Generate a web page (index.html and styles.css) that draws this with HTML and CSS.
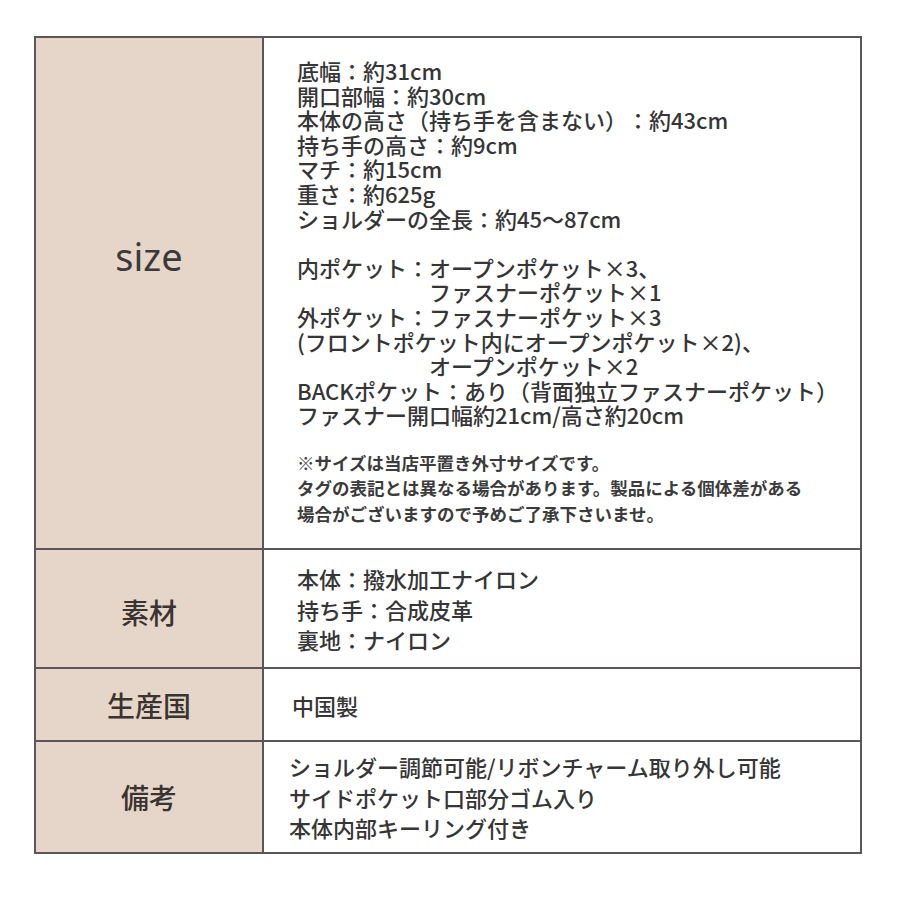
FILE: index.html
```html
<!DOCTYPE html>
<html lang="ja">
<head>
<meta charset="utf-8">
<link rel="stylesheet" href="styles.css">
</head>
<body>
<div class="page">
  <div class="spec">
    <div class="row row-size">
      <div class="label label-size"><span class="size-word">size</span></div>
      <div class="value value-size">
        <div class="group">
          <p>底幅：約31cm</p>
          <p>開口部幅：約30cm</p>
          <p>本体の高さ（持ち手を含まない）：約43cm</p>
          <p>持ち手の高さ：約9cm</p>
          <p>マチ：約15cm</p>
          <p>重さ：約625g</p>
          <p>ショルダーの全長：約45〜87cm</p>
        </div>
        <div class="group">
          <p>内ポケット：オープンポケット×3、</p>
          <p class="indent">ファスナーポケット×1</p>
          <p>外ポケット：ファスナーポケット×3</p>
          <p>(フロントポケット内にオープンポケット×2)、</p>
          <p class="indent">オープンポケット×2</p>
          <p>BACKポケット：あり（背面独立ファスナーポケット）</p>
          <p>ファスナー開口幅約21cm/高さ約20cm</p>
        </div>
        <div class="note">
          <p>※サイズは当店平置き外寸サイズです。</p>
          <p>タグの表記とは異なる場合があります。製品による個体差がある</p>
          <p>場合がございますので予めご了承下さいませ。</p>
        </div>
      </div>
    </div>
    <div class="row row-material">
      <div class="label label-material">素材</div>
      <div class="value value-material">
        <p>本体：撥水加工ナイロン</p>
        <p>持ち手：合成皮革</p>
        <p>裏地：ナイロン</p>
      </div>
    </div>
    <div class="row row-origin">
      <div class="label">生産国</div>
      <div class="value value-origin">
        <p>中国製</p>
      </div>
    </div>
    <div class="row row-notes">
      <div class="label">備考</div>
      <div class="value value-notes">
        <p>ショルダー調節可能/リボンチャーム取り外し可能</p>
        <p>サイドポケット口部分ゴム入り</p>
        <p>本体内部キーリング付き</p>
      </div>
    </div>
  </div>
</div>
</body>
</html>
```

FILE: styles.css
```css
* { box-sizing: border-box; }
html, body {
  margin: 0;
  padding: 0;
  background: #ffffff;
}
body {
  font-family: "Noto Sans CJK JP", "Noto Sans", sans-serif;
  color: #363636;
  text-spacing-trim: space-all;
}
p { margin: 0; }

.page {
  padding: 36px 38px 40px 34px;
}

.spec {
  width: 828px;
  border: 2px solid #5b5757;
  display: flex;
  flex-direction: column;
}

.row {
  display: grid;
  grid-template-columns: 228px 1fr;
  border-top: 2px solid #5b5757;
}
.row:first-child { border-top: none; }

.label {
  background: #e6d6ca;
  border-right: 2px solid #5b5757;
  display: flex;
  align-items: center;
  justify-content: center;
  font-size: 28px;
  font-weight: 500;
  color: #3a3431;
}

.label-size {
  padding-bottom: 74px;
}
.size-word {
  font-family: "Noto Sans", "Open Sans", sans-serif;
  font-size: 38px;
  font-weight: 400;
  color: #3a3a3a;
}
.label-material {
  padding-top: 6px;
}

.value {
  font-size: 22px;
  font-weight: 500;
  color: #363636;
}

.value-size {
  height: 510px;
  padding: 20px 0 0 33px;
  line-height: 24.6px;
}
.group + .group {
  margin-top: 24.6px;
}
.indent {
  padding-left: 132px;
}
.note {
  margin-top: 23px;
  font-size: 17.5px;
  line-height: 25.5px;
  font-weight: 700;
  color: #3c3c3c;
}

.value-material {
  height: 117px;
  padding: 13px 0 0 33px;
  line-height: 30.5px;
}

.value-origin {
  height: 71px;
  padding-left: 28px;
  display: flex;
  align-items: center;
  font-size: 22px;
}

.value-notes {
  height: 110px;
  padding-left: 25px;
  display: flex;
  flex-direction: column;
  justify-content: center;
  line-height: 30.5px;
}
```
